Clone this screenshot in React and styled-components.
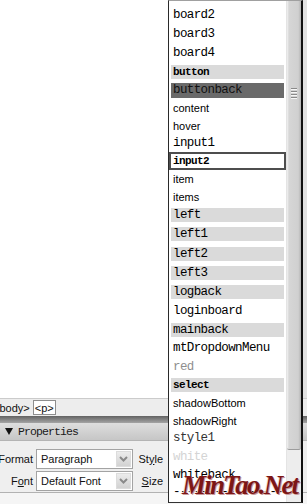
import styled, { createGlobalStyle } from "styled-components";

const GlobalStyle = createGlobalStyle`
    html, body {
        margin: 0;
        padding: 0;
        overflow: hidden;
        background: #fff;
    }
    body {
        font-family: "Liberation Sans", Arial, sans-serif;
    }
`;

const Page = styled.div`
    position: relative;
    width: 307px;
    height: 504px;
    display: flex;
    flex-direction: column;
    overflow: hidden;
`;

const DocArea = styled.div`
    height: 398px;
    display: flex;
    background: #fff;
`;

const DocBody = styled.div`
    flex: 1;
`;

const DocEdge = styled.div`
    width: 5px;
    background: #e2e2e2;
    border-left: 1px solid #cfcfcf;
`;

const StatusBar = styled.div`
    height: 18px;
    box-sizing: border-box;
    border-top: 1px solid #cbcbcb;
    background: #ededed;
    display: flex;
    align-items: center;
    gap: 3px;
    font-size: 11px;
    color: #111;
`;

const Crumb = styled.span`
    margin-left: -7px;
`;

const TagBox = styled.span`
    display: inline-flex;
    align-items: center;
    height: 13px;
    padding: 0 1px;
    border: 1px solid #8e8e8e;
    background: #fff;
`;

const Splitter = styled.div`
    height: 7px;
    background: linear-gradient(#626262, #8a8a8a 60%, #a4a4a4);
`;

const PanelHeader = styled.div`
    height: 18px;
    display: flex;
    align-items: center;
    gap: 5px;
    padding-left: 5px;
    background: linear-gradient(#dedede, #c6c6c6);
    border-bottom: 1px solid #b4b4b4;
    box-sizing: border-box;
    font-family: "Liberation Mono", "Courier New", monospace;
    font-size: 11.5px;
    letter-spacing: -0.9px;
    color: #1a1a1a;
`;

const PanelBody = styled.div`
    height: 51px;
    box-sizing: border-box;
    padding-top: 8px;
    background: #efefef;
    display: grid;
    grid-template-columns: 33px 97px 27px;
    grid-auto-rows: 20px;
    column-gap: 3px;
    row-gap: 2px;
`;

const FieldLabel = styled.div`
    display: flex;
    align-items: center;
    justify-content: flex-end;
    font-size: 11px;
    color: #111;
    white-space: nowrap;
    & u {
        text-decoration: underline;
    }
`;

const Select = styled.div`
    display: flex;
    align-items: stretch;
    box-sizing: border-box;
    border: 1px solid #a3a3a3;
    background: #fff;
    padding: 1px;
`;

const SelectText = styled.div`
    flex: 1;
    display: flex;
    align-items: center;
    padding-left: 3px;
    font-size: 11px;
    color: #111;
`;

const SelectButton = styled.div`
    width: 15px;
    display: flex;
    align-items: center;
    justify-content: center;
    background: linear-gradient(#ececec, #d2d2d2);
    border: 1px solid #dcdcdc;
    box-sizing: border-box;
`;

const BottomStrip = styled.div`
    flex: 1;
    border-top: 1px solid #b2b2b2;
    background: #f5f5f5;
`;

const Popup = styled.div`
    position: absolute;
    left: 168px;
    top: 0;
    width: 135px;
    height: 503px;
    box-sizing: border-box;
    border-left: 1px solid #2a2a2a;
    border-right: 2px solid #111;
    border-top: 1px solid #a0a0a0;
    border-bottom: 1px solid #333;
    display: flex;
    background: #fff;
`;

const List = styled.div`
    flex: 1;
    padding-top: 4px;
    overflow: hidden;
`;

const Item = styled.div`
    height: ${(p) => p.$h}px;
    box-sizing: border-box;
    border: 2px solid ${(p) => (p.$focus ? "#4e4e4e" : "transparent")};
    display: flex;
    align-items: center;
`;

const fonts = {
    mono: `font-family: "Liberation Mono", "Courier New", monospace; font-size: 12.5px; letter-spacing: -0.6px;`,
    bold: `font-family: "Liberation Mono", "Courier New", monospace; font-size: 11px; font-weight: bold; letter-spacing: -0.6px;`,
    sans: `font-family: "Liberation Sans", Arial, sans-serif; font-size: 11px;`,
};

const backs = {
    none: "transparent",
    light: "#dadada",
    dark: "#6a6a6a",
};

const ItemLabel = styled.div`
    flex: 1;
    height: ${(p) => (p.$bg === "dark" ? 15 : 14)}px;
    display: flex;
    align-items: center;
    padding-left: 2px;
    white-space: nowrap;
    background: ${(p) => backs[p.$bg]};
    color: ${(p) => p.$color || "#000"};
    ${(p) => fonts[p.$font]}
`;

const Scrollbar = styled.div`
    width: 15px;
    box-sizing: border-box;
    border-left: 1px solid #e4e4e4;
    background: #ededed;
    display: flex;
    flex-direction: column;
`;

const Thumb = styled.div`
    height: 449px;
    box-sizing: border-box;
    padding-top: 87px;
    background: linear-gradient(90deg, #f2f2f2 0, #d6d6d6 2px, #d0d0d0 80%, #b4b4b4);
    border-bottom: 1px solid #9c9c9c;
    border-radius: 0 0 2px 2px;
    display: flex;
    flex-direction: column;
    align-items: center;
    gap: 2px;
`;

const GripLine = styled.div`
    width: 6px;
    height: 1px;
    background: #8a8a8a;
    box-shadow: 0 1px 0 #f6f6f6;
`;

const Watermark = styled.div`
    position: absolute;
    left: 182px;
    top: 472px;
    font-family: "Liberation Serif", "Times New Roman", serif;
    font-style: italic;
    font-weight: bold;
    font-size: 27px;
    line-height: 1;
    letter-spacing: -1.8px;
    color: #7c1616;
    text-shadow: 1px 1px 0 #c99a9a, -1px 0 0 #f3dede;
    white-space: nowrap;
`;

const items = [
    { text: "board2", h: 19, font: "mono" },
    { text: "board3", h: 19, font: "mono" },
    { text: "board4", h: 19, font: "mono" },
    { text: "button", h: 19, font: "bold", bg: "light" },
    { text: "buttonback", h: 18, font: "mono", bg: "dark", color: "#111" },
    { text: "content", h: 18, font: "sans" },
    { text: "hover", h: 17, font: "sans" },
    { text: "input1", h: 18, font: "mono" },
    { text: "input2", h: 18, font: "bold", focus: true },
    { text: "item", h: 18, font: "sans" },
    { text: "items", h: 17, font: "sans" },
    { text: "left", h: 19, font: "mono", bg: "light" },
    { text: "left1", h: 20, font: "mono", bg: "light" },
    { text: "left2", h: 19, font: "mono", bg: "light" },
    { text: "left3", h: 19, font: "mono", bg: "light" },
    { text: "logback", h: 19, font: "mono", bg: "light" },
    { text: "loginboard", h: 19, font: "mono" },
    { text: "mainback", h: 19, font: "mono", bg: "light" },
    { text: "mtDropdownMenu", h: 18, font: "mono" },
    { text: "red", h: 19, font: "mono", color: "#8e8e8e" },
    { text: "select", h: 18, font: "bold", bg: "light" },
    { text: "shadowBottom", h: 18, font: "sans" },
    { text: "shadowRight", h: 17, font: "sans" },
    { text: "style1", h: 18, font: "mono", color: "#333" },
    { text: "white", h: 19, font: "mono", color: "#d4d4d4" },
    { text: "whiteback", h: 18, font: "mono" },
    { text: "-----------------", h: 16, font: "mono" },
];

const Chevron = () => (
    <svg width="9" height="6" viewBox="0 0 9 6">
        <path d="M1 1 L4.5 4.5 L8 1" fill="none" stroke="#8a8a8a" strokeWidth="2" />
    </svg>
);

const Triangle = () => (
    <svg width="8" height="7" viewBox="0 0 8 7">
        <polygon points="0,0 8,0 4,7" fill="#111" />
    </svg>
);

const Field = ({ value }) => (
    <Select>
        <SelectText>{value}</SelectText>
        <SelectButton>
            <Chevron />
        </SelectButton>
    </Select>
);

export default function App() {
    return (
        <Page>
            <GlobalStyle />
            <DocArea>
                <DocBody />
                <DocEdge />
            </DocArea>
            <StatusBar>
                <Crumb>&lt;body&gt;</Crumb>
                <TagBox>&lt;p&gt;</TagBox>
            </StatusBar>
            <Splitter />
            <PanelHeader>
                <Triangle />
                <span>Properties</span>
            </PanelHeader>
            <PanelBody>
                <FieldLabel>Format</FieldLabel>
                <Field value="Paragraph" />
                <FieldLabel>St<u>y</u>le</FieldLabel>
                <FieldLabel>F<u>o</u>nt</FieldLabel>
                <Field value="Default Font" />
                <FieldLabel><u>S</u>ize</FieldLabel>
            </PanelBody>
            <BottomStrip />

            <Popup>
                <List>
                    {items.map((it, i) => (
                        <Item key={i} $h={it.h} $focus={it.focus}>
                            <ItemLabel $font={it.font} $bg={it.bg || "none"} $color={it.color}>
                                {it.text}
                            </ItemLabel>
                        </Item>
                    ))}
                </List>
                <Scrollbar>
                    <Thumb>
                        <GripLine />
                        <GripLine />
                        <GripLine />
                        <GripLine />
                    </Thumb>
                </Scrollbar>
            </Popup>
            <Watermark>MinTao.Net</Watermark>
        </Page>
    );
}
